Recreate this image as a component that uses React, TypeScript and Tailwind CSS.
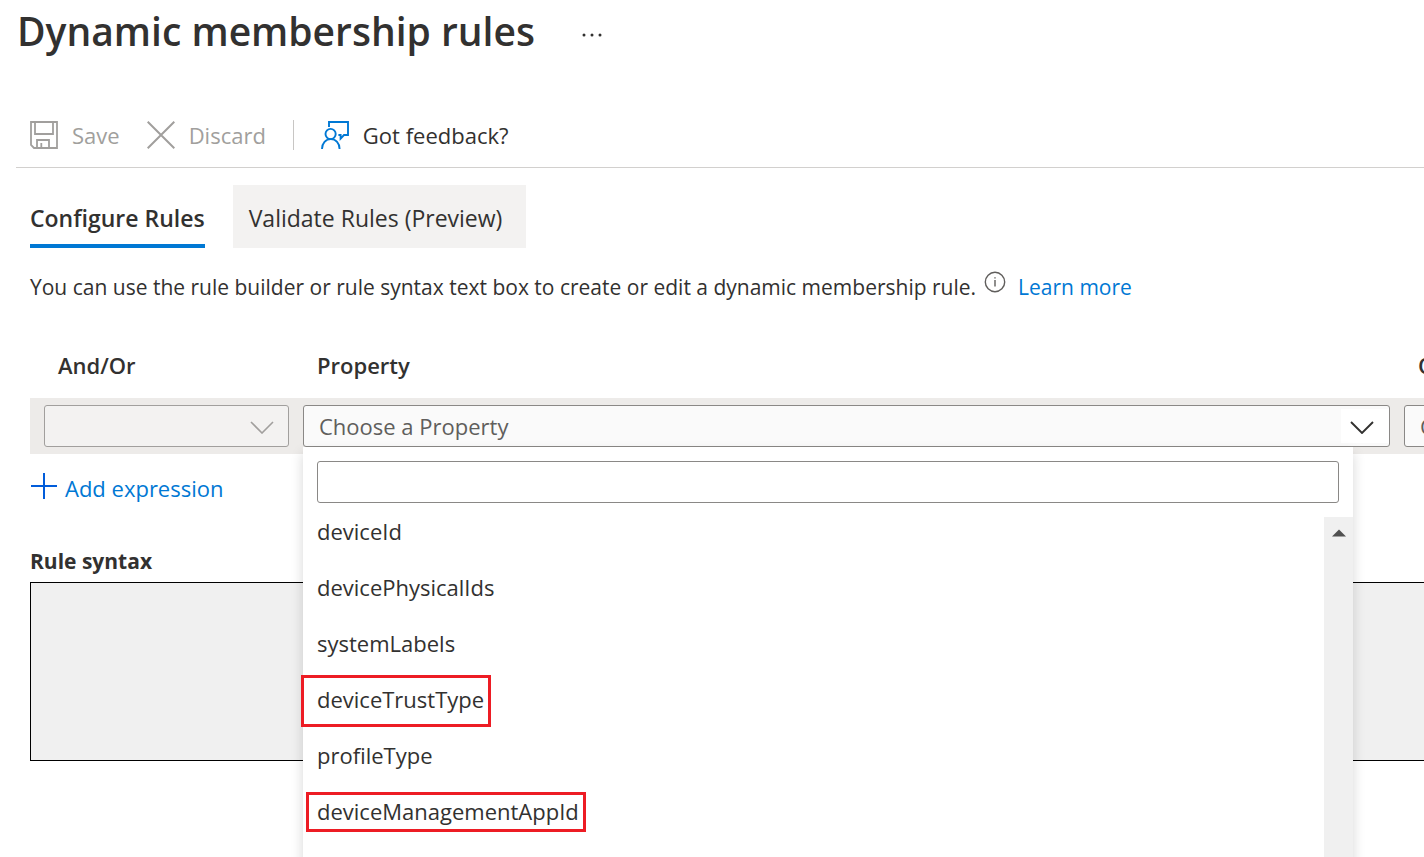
import type { ReactNode } from "react";

const properties: { name: string; mark?: string }[] = [
  { name: "deviceId" },
  { name: "devicePhysicalIds" },
  { name: "systemLabels" },
  { name: "deviceTrustType", mark: "-top-[10px] -bottom-[14px] -left-4 -right-[7px]" },
  { name: "profileType" },
  { name: "deviceManagementAppId", mark: "-top-[5px] -bottom-[7px] -left-[11px] -right-[7px]" },
];

function SaveIcon() {
  return (
    <svg className="size-7" viewBox="0 0 28 28" fill="none" stroke="currentColor" strokeWidth="1.8" aria-hidden="true">
      <path d="M1 1H27V27H4L1 24Z" />
      <path d="M5 1V13H23V1" />
      <path d="M7 27V19H19V27" />
      <path d="M11.3 22V27" />
    </svg>
  );
}

function DiscardIcon() {
  return (
    <svg className="size-7" viewBox="0 0 28 28" fill="none" stroke="currentColor" strokeWidth="2" aria-hidden="true">
      <path d="M.7 .7L27.3 27.3M27.3 .7L.7 27.3" />
    </svg>
  );
}

function FeedbackIcon() {
  return (
    <svg className="size-7 text-[#0078d4]" viewBox="0 0 28 28" fill="none" stroke="currentColor" strokeWidth="1.9" aria-hidden="true">
      <path d="M8 6V1H27V14H23L19.6 17.6V14H17.4" />
      <circle cx="9.6" cy="13" r="5.1" />
      <path d="M1 28C1 22 4.8 18.1 9.8 18.1S18.6 22 18.6 28" />
    </svg>
  );
}

function Chevron({ className }: { className: string }) {
  return (
    <svg className={className} viewBox="0 0 24 13" fill="none" stroke="currentColor" aria-hidden="true">
      <path d="M1 1L12 12L23 1" />
    </svg>
  );
}

function HeaderCell({ children }: { children: ReactNode }) {
  return <th className="h-16 pb-[2px] pl-[21px] text-left font-semibold">{children}</th>;
}

export default function App() {
  return (
    <main className="h-screen overflow-hidden bg-white font-['Open_Sans','Noto_Sans',sans-serif] text-[22px] leading-[30px] text-[#323130]">
      <header className="flex h-16 items-center gap-[46px] pb-[2px] pl-[17px]">
        <h1 className="text-[39px] leading-[56px] font-semibold">Dynamic membership rules</h1>
        <button type="button" aria-label="More actions" className="flex h-8 items-end pb-[10px]">
          <svg className="h-1 w-[22px]" viewBox="0 0 22 4" fill="currentColor" aria-hidden="true">
            <circle cx="3" cy="2" r="1.5" />
            <circle cx="11" cy="2" r="1.5" />
            <circle cx="19" cy="2" r="1.5" />
          </svg>
        </button>
      </header>

      <div className="mt-10 ml-4 flex h-16 items-center gap-[27px] border-b border-[#d2d0ce] pb-[2px] pl-[14px]">
        <button type="button" disabled className="flex items-center gap-[14px] text-[#a19f9d]">
          <SaveIcon />
          Save
        </button>
        <button type="button" disabled className="flex items-center gap-[14px] text-[#a19f9d]">
          <DiscardIcon />
          Discard
        </button>
        <span className="h-[30px] w-px bg-[#c8c6c4]" />
        <button type="button" className="flex items-center gap-[14px]">
          <FeedbackIcon />
          Got feedback?
        </button>
      </div>

      <div role="tablist" className="mt-[17px] flex h-[63px] gap-7 pl-[30px] text-[23px]">
        <button type="button" role="tab" aria-selected="true" className="border-b-4 border-[#0078d4] pt-[6px] font-semibold">
          Configure Rules
        </button>
        <button type="button" role="tab" aria-selected="false" className="bg-[#f3f2f1] pt-[2px] pr-6 pl-4">
          Validate Rules (Preview)
        </button>
      </div>

      <section className="pl-[30px]">
        <div className="mt-[23px] flex items-center text-[21px] whitespace-nowrap">
          <p>You can use the rule builder or rule syntax text box to create or edit a dynamic membership rule.</p>
          <svg className="mb-[10px] ml-2 size-[22px] shrink-0 text-[#605e5c]" viewBox="0 0 22 22" fill="none" stroke="currentColor" strokeWidth="1.4" aria-hidden="true">
            <circle cx="11" cy="11" r="9.7" />
            <path d="M11 9V15.5M11 6.2V7.6" />
          </svg>
          <a href="#learn-more" className="ml-3 text-[#0078d4]">Learn more</a>
        </div>

        <table className="mt-[31px] w-[calc(100%+273px)] table-fixed border-collapse">
          <colgroup>
            <col className="w-[266px]" />
            <col />
            <col className="w-[300px]" />
          </colgroup>
          <thead>
            <tr>
              <th className="h-16 pb-[2px] pl-7 text-left font-semibold">And/Or</th>
              <HeaderCell>Property</HeaderCell>
              <HeaderCell>Operator</HeaderCell>
            </tr>
          </thead>
          <tbody>
            <tr className="h-14 bg-[#edebe9]">
              <td className="py-[7px] pr-[7px] pl-[14px]">
                <div className="relative h-[42px]">
                  <select disabled aria-label="And/Or" className="h-full w-full appearance-none rounded-[3px] border border-[#a19f9d] bg-[#f3f2f1] opacity-100" />
                  <Chevron className="absolute top-4 right-[15px] h-[13px] w-6 text-[#a19f9d] [stroke-width:1.6]" />
                </div>
              </td>
              <td className="p-[7px]">
                <div className="relative h-[42px]">
                  <select aria-label="Property" className="h-full w-full appearance-none rounded-[3px] border border-[#8a8886] bg-[#fafafa] pl-[15px] text-[#605e5c]">
                    <option>Choose a Property</option>
                  </select>
                  <span className="pointer-events-none absolute top-1 right-px flex h-[34px] w-12 items-center justify-center bg-white">
                    <Chevron className="mt-[2px] mr-[6px] h-[13px] w-6 text-[#323130] [stroke-width:1.9]" />
                  </span>
                  <div className="absolute top-full right-[37px] left-0 z-10 flex h-[450px] flex-col bg-white pt-[14px] shadow-[0_6px_12px_rgba(0,0,0,0.16)]">
                    <div className="px-[14px]">
                      <input type="text" aria-label="Search properties" className="block h-[42px] w-full rounded-[3px] border border-[#8a8886] bg-white px-3" />
                    </div>
                    <div className="mt-[14px] flex flex-1 justify-between">
                      <ul role="listbox" aria-label="Property" className="flex flex-col items-start gap-7 pl-[14px] leading-7">
                        {properties.map(({ name, mark }) => (
                          <li key={name} role="option" aria-selected="false" className="relative">
                            {name}
                            {mark && <span className={`absolute border-[3px] border-[#ed1c24] ${mark}`} />}
                          </li>
                        ))}
                      </ul>
                      <div className="flex w-[29px] justify-center bg-[#f0f0f0] pt-3">
                        <svg className="h-2 w-[14px] text-[#505050]" viewBox="0 0 14 8" fill="currentColor" aria-hidden="true">
                          <path d="M0 7.5L7 .5L14 7.5Z" />
                        </svg>
                      </div>
                    </div>
                  </div>
                </div>
              </td>
              <td className="p-[7px]">
                <select aria-label="Operator" className="block h-[42px] w-full appearance-none rounded-[3px] border border-[#8a8886] bg-[#fafafa] pl-[15px] text-[#605e5c]">
                  <option>Choose an Operator</option>
                </select>
              </td>
            </tr>
          </tbody>
        </table>

        <button type="button" className="mt-[18px] flex items-center gap-[7px] text-[#0078d4]">
          <svg className="mb-1 size-7 text-[#015cda]" viewBox="0 0 28 28" fill="none" stroke="currentColor" strokeWidth="2" aria-hidden="true">
            <path d="M1 14H27M14 1V27" />
          </svg>
          Add expression
        </button>

        <label htmlFor="rule-syntax" className="mt-[42px] block text-[21px] font-bold">
          Rule syntax
        </label>
        <textarea id="rule-syntax" readOnly className="mt-[6px] block h-[179px] w-[calc(100%+273px)] resize-none border border-black bg-[#f0f0f0]" />
      </section>
    </main>
  );
}
